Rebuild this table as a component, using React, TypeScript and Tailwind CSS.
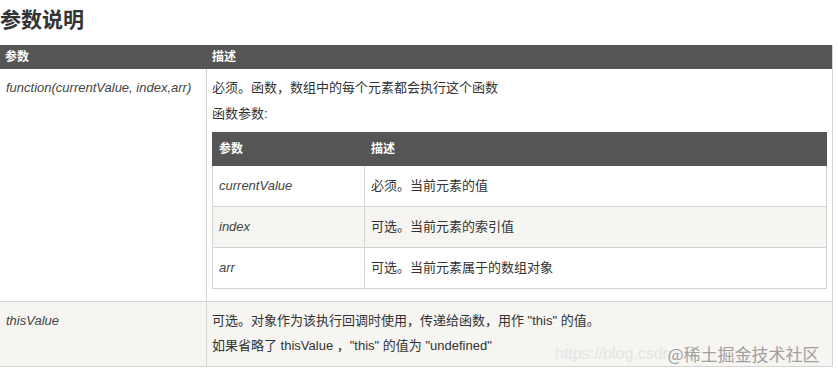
import React from 'react';

const font = { fontFamily: '"Liberation Sans", Arial, "Noto Sans CJK SC", sans-serif' };

const innerRows = [
  { name: 'currentValue', desc: '必须。当前元素的值', bg: 'bg-white' },
  { name: 'index', desc: '可选。当前元素的索引值', bg: 'bg-[#f6f5f1]' },
  { name: 'arr', desc: '可选。当前元素属于的数组对象', bg: 'bg-white' },
];

export default function App() {
  return (
    <div className="relative w-[837px] h-[374px] overflow-hidden bg-white text-[#333]" style={font}>
      <h2 className="h-[45px] pb-[5px] leading-[40px] text-[21px] font-bold text-[#333]">参数说明</h2>

      <div className="w-[833px] border-r border-[#d4d4d4]">
        {/* header */}
        <div className="flex h-[24px] items-center bg-[#555555] text-[12px] font-bold text-white">
          <div className="w-[207px] pl-[5px]">参数</div>
          <div className="flex-1 pl-[5px]">描述</div>
        </div>

        {/* row 1 */}
        <div className="flex border-b border-[#d4d4d4] bg-white">
          <div className="w-[207px] shrink-0 border-r border-[#d4d4d4] pl-[6px] pt-[6px] text-[13px] leading-[26px] italic text-[#444]">
            function(currentValue, index,arr)
          </div>
          <div className="flex-1 px-[5px] pt-[6px] pb-[12px] text-[13px] leading-[26px]">
            <p>必须。函数，数组中的每个元素都会执行这个函数</p>
            <p>函数参数:</p>
            <div className="mt-[5px]">
              <div className="flex h-[34px] items-center bg-[#555555] text-[12px] font-bold text-white">
                <div className="w-[153px] pl-[7px]">参数</div>
                <div className="flex-1 pl-[6px]">描述</div>
              </div>
              {innerRows.map((r) => (
                <div key={r.name} className={`flex h-[41px] border-x border-b border-[#d4d4d4] ${r.bg}`}>
                  <div className="flex w-[152px] shrink-0 items-center border-r border-[#d4d4d4] pl-[6px] italic text-[#444]">
                    {r.name}
                  </div>
                  <div className="flex flex-1 items-center pl-[6px]">{r.desc}</div>
                </div>
              ))}
            </div>
          </div>
        </div>

        {/* row 2 */}
        <div className="flex border-b border-[#d4d4d4] bg-[#f6f5f1]">
          <div className="w-[207px] shrink-0 border-r border-[#d4d4d4] pl-[6px] pt-[6px] text-[13px] leading-[25px] italic text-[#444]">
            thisValue
          </div>
          <div className="flex-1 px-[5px] pt-[6px] pb-[8px] text-[13px] leading-[25px]">
            <p>可选。对象作为该执行回调时使用，传递给函数，用作 "this" 的值。</p>
            <p>如果省略了 thisValue ，"this" 的值为 "undefined"</p>
          </div>
        </div>
      </div>

      {/* watermark */}
      <div className="pointer-events-none absolute left-[555px] top-[341px] flex items-center whitespace-nowrap">
        <span className="text-[16px] text-[#e4e4e4]">https://blog.csdn</span>
        <span className="-ml-[4px] text-[17px] text-[#a0a0a0]" style={{ fontFamily: '"Noto Sans CJK SC", sans-serif' }}>
          @稀土掘金技术社区
        </span>
      </div>
    </div>
  );
}
